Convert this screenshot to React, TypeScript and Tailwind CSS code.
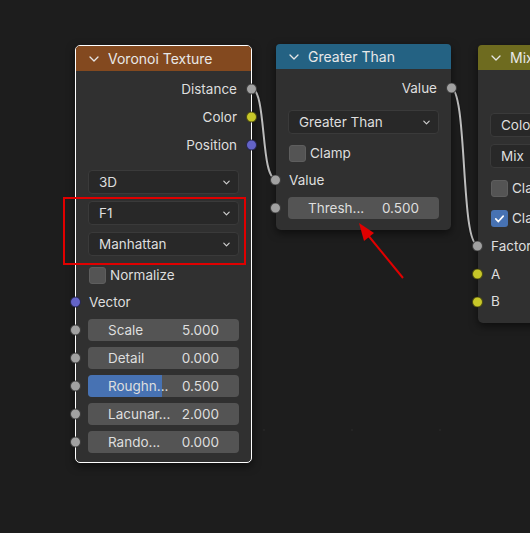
import type { ReactNode } from 'react'

// ─── Small pieces ───────────────────────────────────────────────────────────

const SOCKET: Record<string, string> = {
  gray: 'bg-[#a1a1a1]',
  yellow: 'bg-[#c7c729]',
  blue: 'bg-[#6363c7]',
}

function Socket({ color, side }: { color: string; side: 'left' | 'right' }) {
  return (
    <span
      className={`absolute top-1/2 -translate-y-1/2 w-[11px] h-[11px] rounded-full border border-black/60 ${SOCKET[color]} ${
        side === 'left' ? '-left-[6px]' : '-right-[6px]'
      }`}
    />
  )
}

function HeaderChevron() {
  return (
    <svg width="12" height="12" viewBox="0 0 12 12" fill="none" className="shrink-0">
      <path d="M2 4l4 4 4-4" stroke="#e6e6e6" strokeWidth="1.3" strokeLinecap="round" strokeLinejoin="round" />
    </svg>
  )
}

function Header({ title, color }: { title: string; color: string }) {
  return (
    <div className={`h-[25px] flex items-center gap-[8px] pl-[12px] rounded-t-[4px] text-[14px] text-[#e8e8e8] ${color}`}>
      <HeaderChevron />
      <span className="whitespace-nowrap">{title}</span>
    </div>
  )
}

function Output({ label, color, h = 'h-[28px]' }: { label: string; color: string; h?: string }) {
  return (
    <div className={`relative ${h} flex items-center justify-end pr-[14px] whitespace-nowrap`}>
      {label}
      <Socket color={color} side="right" />
    </div>
  )
}

function Input({ label, color, h = 'h-[28px]', className = '' }: { label: string; color: string; h?: string; className?: string }) {
  return (
    <div className={`relative ${h} flex items-center pl-[13px] whitespace-nowrap ${className}`}>
      {label}
      <Socket color={color} side="left" />
    </div>
  )
}

function Dropdown({ label, className = '' }: { label: string; className?: string }) {
  return (
    <div className={`mx-[12px] h-[24px] flex items-center justify-between pl-[10px] pr-[7px] rounded-[4px] bg-[#282828] border border-[#3a3a3a] whitespace-nowrap ${className}`}>
      <span>{label}</span>
      <svg width="9" height="9" viewBox="0 0 10 10" fill="none">
        <path d="M2 3.5l3 3 3-3" stroke="#d0d0d0" strokeWidth="1.3" strokeLinecap="round" strokeLinejoin="round" />
      </svg>
    </div>
  )
}

function Checkbox({ label, checked = false, className = '' }: { label: string; checked?: boolean; className?: string }) {
  return (
    <div className={`h-[26px] flex items-center gap-[4px] pl-[13px] whitespace-nowrap ${className}`}>
      <span
        className={`w-[17px] h-[17px] rounded-[3px] flex items-center justify-center ${
          checked ? 'bg-[#4772b3]' : 'bg-[#545454] border border-[#5e5e5e]'
        }`}
      >
        {checked && (
          <svg width="13" height="13" viewBox="0 0 14 14" fill="none">
            <path d="M3 7.5l2.8 2.8L11 4.5" stroke="#fff" strokeWidth="1.8" strokeLinecap="round" strokeLinejoin="round" />
          </svg>
        )}
      </span>
      <span>{label}</span>
    </div>
  )
}

function Slider({ label, value, fill, socket = 'gray', className = '' }: { label: string; value: string; fill?: number; socket?: string; className?: string }) {
  return (
    <div className={`relative ${className}`}>
      <Socket color={socket} side="left" />
      <div className="relative mx-[12px] h-[22px] rounded-[4px] bg-[#545454] overflow-hidden">
        {fill != null && <div className="absolute inset-y-0 left-0 bg-[#4772b3]" style={{ width: `${fill * 100}%` }} />}
        <div className="relative h-full flex items-center justify-between px-[20px] whitespace-nowrap">
          <span>{label}</span>
          <span>{value}</span>
        </div>
      </div>
    </div>
  )
}

function Node({ className, children }: { className: string; children: ReactNode }) {
  return (
    <div
      className={`absolute rounded-[5px] bg-[#303030] text-[13.5px] text-[#dedede] shadow-[0_3px_8px_rgba(0,0,0,0.55)] ${className}`}
      style={{ fontFamily: 'Inter, "Noto Sans", sans-serif' }}
    >
      {children}
    </div>
  )
}

// ─── App ────────────────────────────────────────────────────────────────────

export default function App() {
  return (
    <div className="relative w-[530px] h-[533px] overflow-hidden bg-[#1d1d1d]">
      {/* links */}
      <svg className="absolute inset-0" width="530" height="533" fill="none">
        <path d="M251 88 C267 88 260 179 276 179" stroke="#1a1a1a" strokeWidth="4" />
        <path d="M251 88 C267 88 260 179 276 179" stroke="#bdbdbd" strokeWidth="2" />
        <path d="M450 87 C468 87 460 245 478 245" stroke="#1a1a1a" strokeWidth="4" />
        <path d="M450 87 C468 87 460 245 478 245" stroke="#bdbdbd" strokeWidth="2" />
        <circle cx="352" cy="430" r="0.8" fill="#2e2e2e" />
        <circle cx="440" cy="430" r="0.8" fill="#2e2e2e" />
        <circle cx="264" cy="430" r="0.8" fill="#2e2e2e" />
      </svg>

      {/* Voronoi Texture */}
      <Node className="left-[75px] top-[45px] w-[177px] h-[418px] border border-white">
        <Header title="Voronoi Texture" color="bg-[#83491f]" />
        <div className="pt-[4px]">
          <Output label="Distance" color="gray" />
          <Output label="Color" color="yellow" />
          <Output label="Position" color="blue" />
          <Dropdown label="3D" className="mt-[11px]" />
          <Dropdown label="F1" className="mt-[7px]" />
          <Dropdown label="Manhattan" className="mt-[7px]" />
          <Checkbox label="Normalize" className="mt-[6px]" />
          <Input label="Vector" color="blue" />
          <Slider label="Scale" value="5.000" className="mt-[3px]" />
          <Slider label="Detail" value="0.000" className="mt-[6px]" />
          <Slider label="Roughn..." value="0.500" fill={0.49} className="mt-[6px]" />
          <Slider label="Lacunar..." value="2.000" className="mt-[6px]" />
          <Slider label="Rando..." value="0.000" className="mt-[6px]" />
        </div>
      </Node>

      {/* Greater Than */}
      <Node className="left-[276px] top-[44px] w-[175px] h-[186px]">
        <Header title="Greater Than" color="bg-[#246283]" />
        <div className="pt-[5px]">
          <Output label="Value" color="gray" />
          <Dropdown label="Greater Than" className="mt-[8px]" />
          <Checkbox label="Clamp" className="mt-[6px]" />
          <Input label="Value" color="gray" />
          <Slider label="Thresh..." value="0.500" className="mt-[3px]" />
        </div>
      </Node>

      {/* Mix */}
      <Node className="left-[478px] top-[45px] w-[175px] h-[278px]">
        <Header title="Mix" color="bg-[#6e6b1f]" />
        <div className="pt-[5px]">
          <Output label="Result" color="gray" />
          <Dropdown label="Color" className="mt-[10px]" />
          <Dropdown label="Mix" className="mt-[7px]" />
          <Checkbox label="Clamp Factor" className="mt-[7px]" />
          <Checkbox label="Clamp Result" checked className="mt-[4px]" />
          <Input label="Factor" color="gray" className="mt-[1px]" />
          <Input label="A" color="yellow" />
          <Input label="B" color="yellow" h="h-[27px]" />
        </div>
      </Node>

      {/* annotation */}
      <div className="absolute left-[63px] top-[197px] w-[183px] h-[68px] border-2 border-[#e00000]" />
      <svg className="absolute inset-0 pointer-events-none" width="530" height="533" fill="none">
        <path d="M403 278 L367 234" stroke="#e00000" strokeWidth="2" />
        <polygon points="359,223 374,233 364,241" fill="#e00000" />
      </svg>
    </div>
  )
}
